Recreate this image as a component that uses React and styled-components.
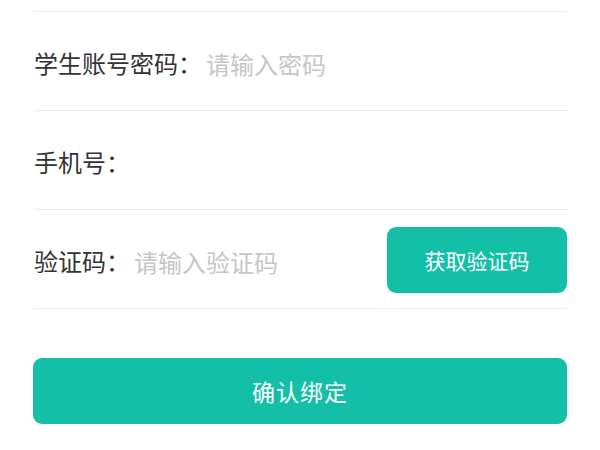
import React from "react";
import styled, { createGlobalStyle } from "styled-components";

const Global = createGlobalStyle`
  html, body { margin: 0; padding: 0; background: #ffffff; }
  body { font-family: "Noto Sans CJK SC", "Noto Sans", sans-serif; }
  * { box-sizing: border-box; }
`;

const Page = styled.div`
  width: 600px;
  height: 450px;
  padding: 11px 33px 0 34px;
  background: #ffffff;
  overflow: hidden;
`;

const Form = styled.div`
  display: flex;
  flex-direction: column;
  border-top: 1px solid #ebebeb;
  margin-right: 0;
`;

const Row = styled.div`
  display: flex;
  align-items: center;
  height: 99px;
  padding-top: 4px;
  border-bottom: 1px solid #ebebeb;
`;

const Label = styled.span`
  font-size: 24px;
  color: #333333;
  white-space: nowrap;
  margin-right: 4px;
  line-height: 1;
`;

const Field = styled.input`
  flex: 1;
  min-width: 0;
  border: none;
  outline: none;
  background: transparent;
  font-family: inherit;
  font-size: 24px;
  color: #333333;
  padding: 0;
  line-height: 1;
  &::placeholder { color: #c6c6c6; }
`;

const CodeButton = styled.button`
  flex: none;
  width: 180px;
  height: 66px;
  margin-top: -2px;
  border: none;
  border-radius: 9px;
  background: #14bfa8;
  color: #ffffff;
  font-family: inherit;
  font-size: 21px;
  cursor: pointer;
`;

const Submit = styled.button`
  display: block;
  width: 534px;
  height: 66px;
  margin: 49px 0 0 -1px;
  border: none;
  border-radius: 9px;
  background: #14bfa8;
  color: #ffffff;
  font-family: inherit;
  font-size: 23px;
  letter-spacing: 1px;
  cursor: pointer;
`;

export default function App() {
  return (
    <>
      <Global />
      <Page>
        <Form>
          <Row>
            <Label>学生账号密码：</Label>
            <Field type="password" placeholder="请输入密码" />
          </Row>
          <Row>
            <Label>手机号：</Label>
            <Field type="tel" />
          </Row>
          <Row>
            <Label>验证码：</Label>
            <Field type="text" placeholder="请输入验证码" />
            <CodeButton>获取验证码</CodeButton>
          </Row>
        </Form>
        <Submit>确认绑定</Submit>
      </Page>
    </>
  );
}
